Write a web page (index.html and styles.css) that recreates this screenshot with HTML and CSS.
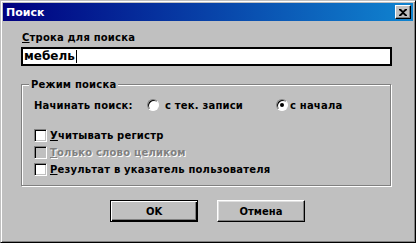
FILE: index.html
```html
<!DOCTYPE html>
<html lang="ru">
<head>
    <meta charset="UTF-8">
    <title>Поиск</title>
    <link rel="stylesheet" href="styles.css">
</head>
<body>
    <div class="window">
        <div class="titlebar">
            <span class="title">Поиск</span>
            <button class="close">
                <svg width="8" height="7" viewBox="0 0 8 7"><path d="M0 0h2l2 2 2-2h2v1L5 3.5 8 6v1H6L4 5 2 7H0V6l3-2.5L0 1z" fill="#000"/></svg>
            </button>
        </div>

        <div class="content">
            <div class="label"><u>С</u>трока для поиска</div>
            <div class="textbox">мебель<span class="caret"></span></div>

            <div class="group">
                <span class="legend">Режим поиска</span>
                <div class="radio-row">
                    <span class="start-label">Начинать поиск:</span>
                    <span class="option opt-first"><span class="radio"></span>с тек. записи</span>
                    <span class="option opt-second"><span class="radio checked"></span>с начала</span>
                </div>
                <div class="check-row"><span class="check"></span><span><u>У</u>читывать регистр</span></div>
                <div class="check-row disabled"><span class="check"></span><span><u>Т</u>олько слово целиком</span></div>
                <div class="check-row"><span class="check"></span><span><u>Р</u>езультат в указатель пользователя</span></div>
            </div>

            <div class="buttons">
                <button class="btn default">OK</button>
                <button class="btn">Отмена</button>
            </div>
        </div>
    </div>
</body>
</html>
```

FILE: styles.css
```css
body {
    margin: 0;
    padding: 0;
    background-color: #c0c0c0;
    font-family: "DejaVu Sans", Verdana, sans-serif;
    font-size: 10px;
    font-weight: bold;
    letter-spacing: 0.2px;
    color: #000;
}

.window {
    width: 416px;
    height: 243px;
    box-sizing: border-box;
    background-color: #c0c0c0;
    border: 1px solid;
    border-color: #c0c0c0 #000 #000 #c0c0c0;
    box-shadow: inset 1px 1px #fff, inset -1px -1px #808080;
    padding: 2px;
}

.titlebar {
    height: 18px;
    display: flex;
    align-items: center;
    justify-content: space-between;
    padding: 0 2px 0 3px;
    background: linear-gradient(to right, #000080, #1084d0);
}

.title {
    color: #fff;
    font-size: 11px;
    font-weight: bold;
    letter-spacing: 0;
}

.close {
    width: 16px;
    height: 14px;
    padding: 0;
    display: flex;
    align-items: center;
    justify-content: center;
    background-color: #c0c0c0;
    border: 1px solid;
    border-color: #fff #000 #000 #fff;
    box-shadow: inset -1px -1px #808080;
}

.content {
    padding: 10px 0 0 18px;
}

.label {
    height: 14px;
    line-height: 14px;
    padding-left: 1px;
}

.textbox {
    width: 371px;
    height: 19px;
    box-sizing: border-box;
    margin-top: 2px;
    background-color: #fff;
    border: 2px solid #000;
    padding-left: 1px;
    line-height: 15px;
    font-size: 12px;
    letter-spacing: 0;
    display: flex;
    align-items: center;
}

.caret {
    display: inline-block;
    width: 1px;
    height: 13px;
    background-color: #000;
    margin-left: 1px;
}

.group {
    position: relative;
    width: 370px;
    height: 102px;
    box-sizing: border-box;
    margin-top: 18px;
    border: 1px solid #808080;
    box-shadow: inset 1px 1px #fff, 1px 1px #fff;
    padding: 13px 0 0 12px;
}

.legend {
    position: absolute;
    top: -7px;
    left: 7px;
    padding: 0 2px;
    background-color: #c0c0c0;
    line-height: 13px;
}

.radio-row {
    display: flex;
    align-items: center;
    height: 14px;
}

.start-label {
    width: 113px;
}

.option {
    display: flex;
    align-items: center;
    gap: 6px;
}

.opt-first {
    width: 129px;
}

.opt-second {
    gap: 2px;
}

.radio {
    width: 12px;
    height: 12px;
    box-sizing: border-box;
    border-radius: 50%;
    background-color: #fff;
    border: 1px solid;
    border-color: #808080 #fff #fff #808080;
    box-shadow: inset 1px 1px #000;
    position: relative;
}

.radio.checked::after {
    content: "";
    position: absolute;
    left: 3px;
    top: 3px;
    width: 4px;
    height: 4px;
    border-radius: 50%;
    background-color: #000;
}

.check-row {
    display: flex;
    align-items: center;
    gap: 3px;
    height: 17px;
}

.radio-row + .check-row {
    margin-top: 15px;
}

.check {
    width: 13px;
    height: 13px;
    box-sizing: border-box;
    background-color: #fff;
    border: 1px solid;
    border-color: #808080 #fff #fff #808080;
    box-shadow: inset 1px 1px #000, inset -1px -1px #c0c0c0;
}

.disabled {
    color: #808080;
    text-shadow: 1px 1px #fff;
}

.disabled .check {
    background-color: #c0c0c0;
}

.buttons {
    display: flex;
    gap: 19px;
    margin: 14px 0 0 89px;
}

.btn {
    width: 88px;
    height: 22px;
    box-sizing: border-box;
    padding: 0;
    font-family: "DejaVu Sans", Verdana, sans-serif;
    font-size: 10px;
    font-weight: bold;
    color: #000;
    background-color: #c0c0c0;
    border: 1px solid;
    border-color: #fff #000 #000 #fff;
    box-shadow: inset -1px -1px #808080, inset 1px 1px #dfdfdf;
}

.btn.default {
    border: 1px solid #000;
    box-shadow: inset 1px 1px #fff, inset -1px -1px #000, inset -2px -2px #808080;
}
```
